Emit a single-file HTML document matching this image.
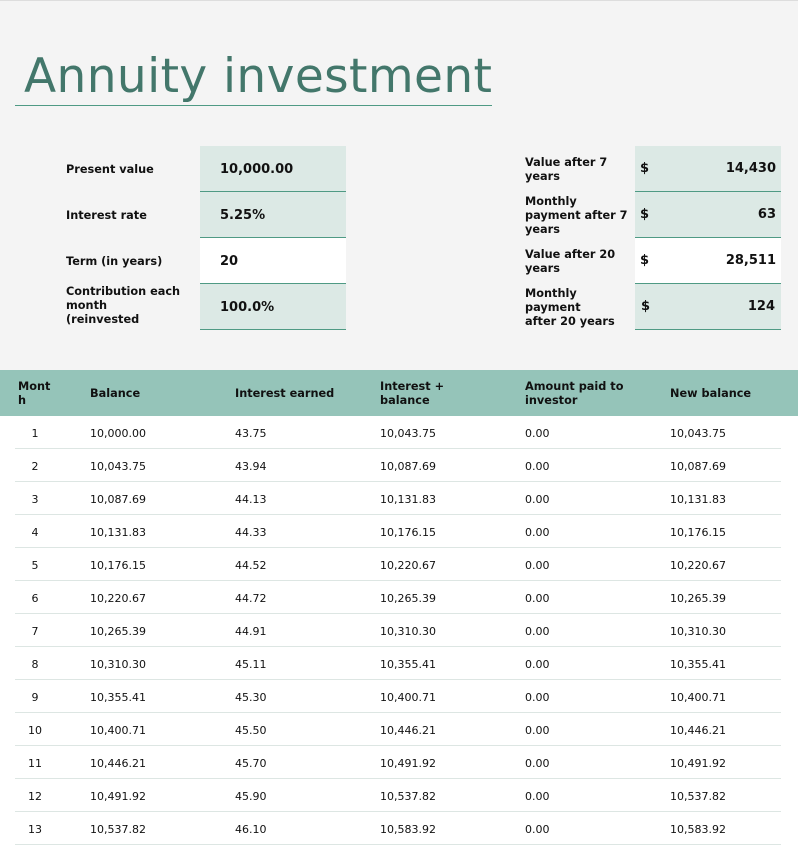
<!DOCTYPE html>
<html><head><meta charset="utf-8"><style>
*{margin:0;padding:0;box-sizing:border-box}
body{width:798px;height:827px;overflow:hidden;background:#fff;font-family:"DejaVu Sans",Verdana,sans-serif;color:#111;position:relative}
.top{position:absolute;left:0;top:0;width:798px;height:370px;background:#f4f4f4;border-top:1px solid #ddd}
.title{position:absolute;left:24px;top:49px;font-size:47px;color:#43776b;white-space:nowrap;letter-spacing:0.4px}
.uline{position:absolute;left:15px;top:105px;width:477px;height:1px;background:#4f9a84}
.lab{position:absolute;font-size:11.3px;font-weight:bold;line-height:14px;display:flex;align-items:center}
.cell{position:absolute;height:46px;border-bottom:1px solid #4f9a84;background:#dce9e5;font-size:13px;font-weight:bold;display:flex;align-items:center;padding-top:2px}
.w{background:#fff}
.hdr{position:absolute;left:0;top:370px;width:798px;height:46px;background:#95c4b9}
.h{position:absolute;font-size:11.3px;font-weight:bold;line-height:14px;top:371px;height:46px;display:flex;align-items:center}
.row{position:absolute;left:15px;width:766px;height:33px;border-bottom:1px solid #dde6e3;font-size:11px}
.row span{position:absolute;top:1px;line-height:33px}
</style></head><body>
<div class="top"></div>
<div class="title">Annuity investment</div>
<div class="uline"></div>

<div class="lab" style="left:66px;top:147px;height:46px">Present value</div>
<div class="lab" style="left:66px;top:193px;height:46px">Interest rate</div>
<div class="lab" style="left:66px;top:239px;height:46px">Term (in years)</div>
<div class="lab" style="left:66px;top:285px;height:42px;width:130px;align-items:flex-start;overflow:hidden;white-space:nowrap">Contribution each<br>month<br>(reinvested<br>amount)</div>
<div class="cell" style="left:200px;top:146px;width:146px;padding-left:20px">10,000.00</div>
<div class="cell" style="left:200px;top:192px;width:146px;padding-left:20px">5.25%</div>
<div class="cell w" style="left:200px;top:238px;width:146px;padding-left:20px">20</div>
<div class="cell" style="left:200px;top:284px;width:146px;padding-left:20px">100.0%</div>

<div class="lab" style="left:525px;top:147px;height:46px;width:92px">Value after 7 years</div>
<div class="lab" style="left:525px;top:193px;height:46px;width:108px">Monthly payment after 7 years</div>
<div class="lab" style="left:525px;top:239px;height:46px;width:98px">Value after 20 years</div>
<div class="lab" style="left:525px;top:285px;height:46px;width:102px">Monthly payment<br>after 20 years</div>
<div class="cell" style="left:635px;top:146px;width:146px;padding:0 5px;justify-content:space-between"><span>$</span><span>14,430</span></div>
<div class="cell" style="left:635px;top:192px;width:146px;padding:0 5px;justify-content:space-between"><span>$</span><span>63</span></div>
<div class="cell w" style="left:635px;top:238px;width:146px;padding:0 5px;justify-content:space-between"><span>$</span><span>28,511</span></div>
<div class="cell" style="left:635px;top:284px;width:146px;padding:0 6px;justify-content:space-between"><span>$</span><span>124</span></div>

<div class="hdr"></div>
<div class="h" style="left:18px;width:40px">Mont h</div>
<div class="h" style="left:90px">Balance</div>
<div class="h" style="left:235px">Interest earned</div>
<div class="h" style="left:380px;width:110px">Interest + balance</div>
<div class="h" style="left:525px;width:120px">Amount paid to investor</div>
<div class="h" style="left:670px">New balance</div>

<div id="rows"></div>
<script>
var d=[["10,000.00","43.75","10,043.75"],["10,043.75","43.94","10,087.69"],["10,087.69","44.13","10,131.83"],["10,131.83","44.33","10,176.15"],["10,176.15","44.52","10,220.67"],["10,220.67","44.72","10,265.39"],["10,265.39","44.91","10,310.30"],["10,310.30","45.11","10,355.41"],["10,355.41","45.30","10,400.71"],["10,400.71","45.50","10,446.21"],["10,446.21","45.70","10,491.92"],["10,491.92","45.90","10,537.82"],["10,537.82","46.10","10,583.92"]];
var h="";d.forEach(function(r,i){h+='<div class="row" style="top:'+(416+33*i)+'px"><span style="left:0;width:40px;text-align:center">'+(i+1)+'</span><span style="left:75px">'+r[0]+'</span><span style="left:220px">'+r[1]+'</span><span style="left:365px">'+r[2]+'</span><span style="left:510px">0.00</span><span style="left:655px">'+r[2]+'</span></div>';});
document.getElementById("rows").innerHTML=h;
</script>
</body></html>
